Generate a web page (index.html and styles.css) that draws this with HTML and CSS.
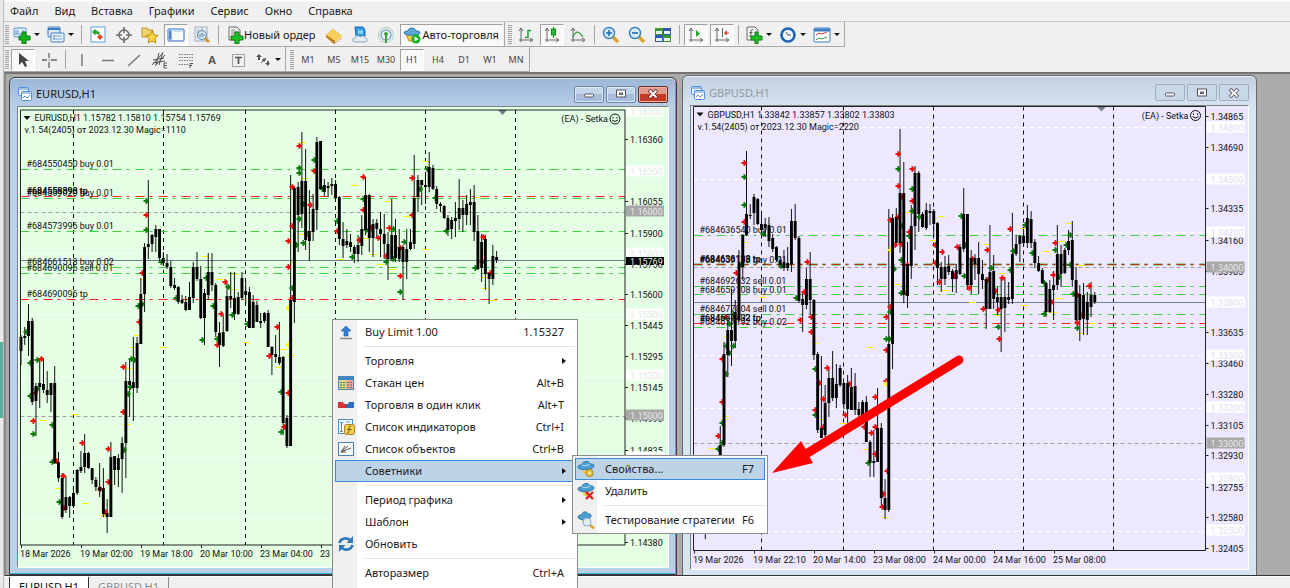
FILE: index.html
```html
<!DOCTYPE html>
<html lang="ru">
<head>
<meta charset="utf-8">
<title>EURUSD,H1</title>
<link rel="stylesheet" href="styles.css">
</head>
<body>
<div class="edge"><div class="edge-patch"></div></div>
<div class="app">
  <nav class="menubar">
    <button>Файл</button><button>Вид</button><button>Вставка</button><button>Графики</button><button>Сервис</button><button>Окно</button><button>Справка</button>
  </nav>

  <div class="toolrow">
    <div class="toolbar">
      <span class="grip"></span>
      <button class="split" aria-label="Новый график"><svg class="ico" viewBox="0 0 18 18"><rect x="1" y="2" width="12" height="9" rx="1" fill="#e6f0fb" stroke="#5b8fca"/><path d="M3 4v5M5 4v3M3 8h7M9 4l2 2" stroke="#5b8fca" fill="none"/><path d="M9 6h4v4h4v4h-4v4H9v-4H6v-4h3z" fill="#19b219" stroke="#0a7d12"/></svg><i></i></button>
      <button class="split" aria-label="Профили"><svg class="ico" viewBox="0 0 18 18"><rect x="1" y="1" width="12" height="10" rx="1" fill="#dceafa" stroke="#3e7cc0"/><path d="M1 3h12" stroke="#3e7cc0" stroke-width="2"/><rect x="4" y="7" width="13" height="9" rx="1" fill="#eaf3fd" stroke="#3e7cc0"/><path d="M6 10h9M6 13h9M7 9v5" stroke="#6f9fd4" fill="none"/></svg><i></i></button>
      <span class="sep"></span>
      <button aria-label="Обзор рынка"><svg class="ico" viewBox="0 0 18 18"><rect x="2" y="1" width="14" height="15" fill="#fff" stroke="#5fa0d8"/><path d="M6 3l3 3-3 3-3-3z" fill="#27a827"/><path d="M9 5l2 2-2 2-2-2z" fill="#27a827"/><path d="M11 8l3 3-3 3-3-3z" fill="#e8492c"/></svg></button>
      <button aria-label="Перекрестие"><svg class="ico" viewBox="0 0 18 18" fill="none" stroke="#6b6b6b"><circle cx="9" cy="9" r="5" stroke-width="1.4"/><path d="M9 1v6M9 11v6M1 9h6M11 9h6" stroke-width="1.6"/></svg></button>
      <button aria-label="Навигатор"><svg class="ico" viewBox="0 0 18 18"><path d="M1 2h5l1 2h5v7H1z" fill="#f3d36b" stroke="#b9942c"/><path d="M11 5l2 4 4 .5-3 3 .8 4.500-3.800-2-3.800 2 .8-4.500-3-3 4-.5z" fill="#ffd83d" stroke="#b98a10"/></svg></button>
      <button class="on" aria-label="Терминал"><svg class="ico" viewBox="0 0 18 18"><rect x="1" y="3" width="16" height="12" rx="1" fill="#f6faff" stroke="#2d6cc0"/><rect x="2" y="4" width="3" height="10" fill="#8db7e8"/><path d="M3 5v8" stroke="#1e4f9e"/><path d="M6 5h10" stroke="#9cc1ee"/></svg></button>
      <button aria-label="Тестер"><svg class="ico" viewBox="0 0 18 18"><rect x="2" y="1" width="12" height="14" fill="#e7edf4" stroke="#9eb0c4"/><path d="M5 3v9M9 2v6" stroke="#8fa2b7"/><path d="M12 12l4 4" stroke="#d99a24" stroke-width="3"/><circle cx="9" cy="9" r="4.500" fill="#cfe3f6" fill-opacity=".8" stroke="#6688ad"/><path d="M7 8v3M9 7v4M11 8v2" stroke="#6688ad"/></svg></button>
      <span class="sep"></span>
      <button class="wide"><svg class="ico" viewBox="0 0 18 18"><path d="M3 1h8l3 3v10H3z" fill="#f4f4f4" stroke="#6b6b6b"/><path d="M5 4h4M5 6h6M5 8h6" stroke="#8b8b8b"/><path d="M9 6h4v4h4v4h-4v4H9v-4H5v-4h4z" fill="#1fbf25" stroke="#0a7d12"/></svg><span>Новый ордер</span></button>
      <button aria-label="MetaEditor"><svg class="ico" viewBox="0 0 18 18"><path d="M1 9l7-6 9 7v2l-8 6-8-7z" fill="#b97a12"/><path d="M1 9l7-6 9 7-7 5z" fill="#f8cf5f"/><path d="M10 15l7-5v1.500l-7 5z" fill="#fff3c8"/></svg></button>
      <button aria-label="Хостинг"><svg class="ico" viewBox="0 0 18 18"><path d="M4 1h8l2 3v6H5z" fill="#2d9be8" stroke="#1a66a8"/><path d="M7 5h5M7 7h5" stroke="#dff"/><path d="M3 16c-2-1-2-4 1-4 1-3 4-3 5-1 2-2 5-1 5 1 3 0 3 4 0 4z" fill="#e3edf6" stroke="#86a3c0"/></svg></button>
      <button aria-label="Сигналы"><svg class="ico" viewBox="0 0 18 18" fill="none"><circle cx="9" cy="9" r="7.500" stroke="#a9cdb8"/><circle cx="9" cy="9" r="5" stroke="#7fb1cf" stroke-width="1.500"/><circle cx="9" cy="8" r="2" fill="#3ba53b"/><path d="M9 9v8" stroke="#3ba53b" stroke-width="2"/></svg></button>
      <button class="wide on"><svg class="ico" viewBox="0 0 18 18"><path d="M3 8h12l-2 7H6z" fill="#f3c644" stroke="#b58b1c"/><path d="M1 7c0-2 3-2 4-2 0-4 7-4 8 0 2 0 4 0 4 2 0 3-16 3-16 0z" fill="#58a8dc" stroke="#2a76ae"/><circle cx="13" cy="13" r="4.500" fill="#19b526"/><path d="M11.500 10.500l4 2.500-4 2.500z" fill="#fff"/></svg><span>Авто-торговля</span></button>
    </div>
    <div class="toolbar">
      <span class="grip"></span>
      <button aria-label="Бары"><svg class="ico" viewBox="0 0 18 18" fill="none" stroke="#666"><path d="M4 2v14M2 14h14M2 5l2-3 2 3M13 12l3 2-3 2"/><path d="M11 4v8M11 4.500h3M8 11.500h3" stroke="#1e9a2a" stroke-width="1.500"/></svg></button>
      <button class="on" aria-label="Свечи"><svg class="ico" viewBox="0 0 18 18" fill="none" stroke="#666"><path d="M4 2v14M2 14h14M2 5l2-3 2 3M13 12l3 2-3 2"/><path d="M10.500 1v11" stroke="#118a1c"/><rect x="8.500" y="3" width="4" height="6" fill="#25c02f" stroke="#118a1c"/></svg></button>
      <button aria-label="Линия"><svg class="ico" viewBox="0 0 18 18" fill="none" stroke="#666"><path d="M4 2v14M2 14h14M2 5l2-3 2 3M13 12l3 2-3 2"/><path d="M4 11c3-7 6-6 10 0" stroke="#2ba336" stroke-width="1.300"/></svg></button>
      <span class="sep"></span>
      <button aria-label="Приблизить"><svg class="ico" viewBox="0 0 18 18"><path d="M11 11l5 5" stroke="#d9a52b" stroke-width="3.500"/><circle cx="7" cy="7" r="5.500" fill="#d8ecfb" stroke="#2f7cc4" stroke-width="1.400"/><path d="M7 4v6M4 7h6" stroke="#1f6ab4" stroke-width="1.600"/></svg></button>
      <button aria-label="Отдалить"><svg class="ico" viewBox="0 0 18 18"><path d="M11 11l5 5" stroke="#d9a52b" stroke-width="3.500"/><circle cx="7" cy="7" r="5.500" fill="#d8ecfb" stroke="#2f7cc4" stroke-width="1.400"/><path d="M4 7h6" stroke="#1f6ab4" stroke-width="1.600"/></svg></button>
      <button aria-label="Плитка"><svg class="ico" viewBox="0 0 18 18"><rect x="1" y="2" width="8" height="7" fill="#3c9a2c"/><rect x="9" y="2" width="8" height="7" fill="#2c56b8"/><rect x="1" y="9" width="8" height="7" fill="#2c56b8"/><rect x="9" y="9" width="8" height="7" fill="#3c9a2c"/><path d="M2 6.500h6M10 6.500h6M2 13.500h6M10 13.500h6" stroke="#eaf4ff" stroke-width="3"/></svg></button>
      <span class="sep far"></span>
      <button class="on" aria-label="Автопрокрутка"><svg class="ico" viewBox="0 0 18 18" fill="none" stroke="#666"><path d="M4 2v14M2 14h14M2 5l2-3 2 3M13 12l3 2-3 2"/><path d="M9 4l4 3.500L9 11z" fill="#22a52f" stroke="none"/></svg></button>
      <button class="on" aria-label="Сдвиг графика"><svg class="ico" viewBox="0 0 18 18" fill="none" stroke="#666"><path d="M4 2v14M2 14h14M2 5l2-3 2 3M13 12l3 2-3 2M9.500 2v9"/><path d="M16 7h-4M13.500 5l-2 2 2 2z" stroke="#d1472a" fill="#d1472a"/></svg></button>
      <span class="sep"></span>
      <button class="split" aria-label="Индикаторы"><svg class="ico" viewBox="0 0 18 18"><path d="M2 1h8l3 3v10H2z" fill="#f4f4f4" stroke="#6b6b6b"/><path d="M8 3.500c-2 0-2 1-2 3s0 4-2 4M4.500 6.500h3" stroke="#555" fill="none"/><path d="M10 6h3v4h4v4h-4v4h-3v-4H6v-4h4z" fill="#1fbf25" stroke="#0a7d12"/></svg><i></i></button>
      <button class="split" aria-label="Периоды"><svg class="ico" viewBox="0 0 18 18"><circle cx="9" cy="9" r="6.500" fill="#eef6ff" stroke="#1f63b8" stroke-width="2.600"/><path d="M7 6l2 3h3" stroke="#555" fill="none"/></svg><i></i></button>
      <button class="split" aria-label="Шаблоны"><svg class="ico" viewBox="0 0 18 18"><rect x="1" y="2" width="16" height="14" rx="1" fill="#fff" stroke="#3d7ec4"/><path d="M1 4h16" stroke="#3d7ec4" stroke-width="3"/><path d="M3 9l3-2 3 1 5-2" stroke="#c33a28" fill="none"/><path d="M3 14l3-2 3 1 5-2" stroke="#3a9a3a" fill="none"/></svg><i></i></button>
    </div>
  </div>

  <div class="toolrow">
    <div class="toolbar gray">
      <span class="grip"></span>
      <button class="on" aria-label="Курсор"><svg class="ico" viewBox="0 0 18 18"><path d="M5 2v12l3-3 3 5 2-1-2-5h4z" fill="#444"/></svg></button>
      <button aria-label="Перекрестие"><svg class="ico" viewBox="0 0 18 18" stroke="#666"><path d="M9 2v5M9 11v6M2 9h5M11 9h6M9 8.500v1" stroke-width="1.300"/></svg></button>
      <span class="sep"></span>
      <button aria-label="Вертикальная линия"><svg class="ico" viewBox="0 0 18 18" stroke="#777"><path d="M9 3v12" stroke-width="1.500"/></svg></button>
      <button aria-label="Горизонтальная линия"><svg class="ico" viewBox="0 0 18 18" stroke="#777"><path d="M3 9.500h12" stroke-width="1.500"/></svg></button>
      <button aria-label="Трендовая линия"><svg class="ico" viewBox="0 0 18 18" stroke="#777"><path d="M3 15L15 4" stroke-width="1.500"/></svg></button>
      <button aria-label="Канал"><svg class="ico" viewBox="0 0 18 18" stroke="#555" fill="none"><path d="M1 14L11 3M4 15L14 4M2 9l11-2M2 12l12-2M8 2L5 14M12 1L8 14"/><path d="M16 12h-3v5h3M13 14.500h3"/></svg></button>
      <button aria-label="Фибоначчи"><svg class="ico" viewBox="0 0 18 18" stroke="#777" fill="none"><path d="M2 3.500h14M2 6.500h14M2 9.500h14M2 13.500h9" stroke-dasharray="1.500 1"/><path d="M16 12.500h-3V17M13 14.500h2" stroke="#555"/></svg></button>
      <button class="glyph">A</button>
      <button aria-label="Метка"><svg class="ico" viewBox="0 0 18 18" stroke="#555" fill="none"><rect x="3.500" y="3.500" width="12" height="12" stroke-dasharray="1 1"/><path d="M6 6.500h7M9.500 6v7" stroke-width="1.700"/></svg></button>
      <button class="split" aria-label="Стрелки"><svg class="ico" viewBox="0 0 18 18" fill="#555"><path d="M5 3l3 3H6v3H4V6H2z"/><path d="M7 12l5-5" stroke="#555"/><path d="M8 9l2-2 2 2-2 2z"/><path d="M13 10h2v2h1l-2 3-3-3h2z"/></svg><i></i></button>
    </div>
    <div class="toolbar periods">
      <span class="grip"></span>
      <button>M1</button><button>M5</button><button>M15</button><button>M30</button><button class="on">H1</button><button>H4</button><button>D1</button><button>W1</button><button>MN</button>
    </div>
  </div>

  <main class="workspace">
    <section class="window back">
      <header class="titlebar">
        <svg class="wico" viewBox="0 0 14 14"><rect x=".5" y=".5" width="10" height="8" rx="1" fill="#eaf3ff" stroke="#4f8fe0"/><path d="M1 2h9" stroke="#4f8fe0"/><rect x="3.500" y="4.500" width="10" height="9" rx="1" fill="#fff" stroke="#4f8fe0"/><path d="M4 6h9M5 11l2-2 2 2 3-3" stroke="#4f8fe0" fill="none"/></svg>
        <h2>GBPUSD,H1</h2>
        <button aria-label="Свернуть"><svg viewBox="0 0 12 10"><rect x="1.500" y="5" width="9" height="3" rx="1" fill="#fff" stroke="#556"/></svg></button>
        <button aria-label="Развернуть"><svg viewBox="0 0 12 10"><rect x="1.500" y="1" width="9" height="7" fill="#fff" stroke="#556"/><rect x="4.500" y="4" width="3" height="1.500" fill="#ccd" stroke="#556"/></svg></button>
        <button aria-label="Закрыть"><svg viewBox="0 0 12 10"><path d="M2 1l8 8M10 1L2 9" stroke="#556" stroke-width="3.600"/><path d="M2.500 1.500l7 7M9.500 1.500l-7 7" stroke="#fff" stroke-width="1.800"/></svg></button>
      </header>
      <svg class="chart lilac" id="gbp" viewBox="691 106 557 463" preserveAspectRatio="xMinYMin slice"></svg>
    </section>

    <section class="window front">
      <header class="titlebar">
        <svg class="wico" viewBox="0 0 14 14"><rect x=".5" y=".5" width="10" height="8" rx="1" fill="#eaf3ff" stroke="#4f8fe0"/><path d="M1 2h9" stroke="#4f8fe0"/><rect x="3.500" y="4.500" width="10" height="9" rx="1" fill="#fff" stroke="#4f8fe0"/><path d="M4 6h9M5 11l2-2 2 2 3-3" stroke="#4f8fe0" fill="none"/></svg>
        <h2>EURUSD,H1</h2>
        <button aria-label="Свернуть"><svg viewBox="0 0 12 10"><rect x="1.500" y="5" width="9" height="3" rx="1" fill="#fff" stroke="#556"/></svg></button>
        <button aria-label="Развернуть"><svg viewBox="0 0 12 10"><rect x="1.500" y="1" width="9" height="7" fill="#fff" stroke="#556"/><rect x="4.500" y="4" width="3" height="1.500" fill="#ccd" stroke="#556"/></svg></button>
        <button class="close" aria-label="Закрыть"><svg viewBox="0 0 12 10"><path d="M2 1l8 8M10 1L2 9" stroke="#622" stroke-width="3.600"/><path d="M2.500 1.500l7 7M9.500 1.500l-7 7" stroke="#fff" stroke-width="2"/></svg></button>
      </header>
      <svg class="chart green" id="eur" viewBox="18 107 650 460" preserveAspectRatio="xMinYMin slice"></svg>
    </section>
  </main>

  <footer class="tabs"><button class="active">EURUSD,H1</button><button>GBPUSD,H1</button></footer>
</div>

<div class="menu" role="menu">
  <button><svg class="ico" viewBox="0 0 18 18"><path d="M9 3l5 5h-3v5H7V8H4z" fill="#2f7fd6" stroke="#1b5ca8" stroke-width=".6"/><path d="M3 15.500h12" stroke="#888" stroke-width="1.500"/></svg><span>Buy Limit 1.00</span><kbd>1.15327</kbd></button>
  <hr>
  <button class="sub"><b></b><span>Торговля</span></button>
  <button><svg class="ico" viewBox="0 0 18 18"><rect x="1.500" y="2.500" width="15" height="13" fill="#fff" stroke="#4a83b8"/><path d="M2 4.500h14" stroke="#3f86c9" stroke-width="3"/><rect x="2" y="6" width="7" height="9" fill="#c8e08a"/><rect x="9" y="6" width="7" height="9" fill="#f0a898"/><path d="M3 8.500h5M3 11h5M3 13.500h5M10 8.500h5M10 11h5M10 13.500h5" stroke="#666" stroke-dasharray="2 1"/></svg><span>Стакан цен</span><kbd>Alt+B</kbd></button>
  <button><svg class="ico" viewBox="0 0 18 18"><path d="M1 6h5l1 2h2v4H1z" fill="#d93030"/><path d="M17 6h-5l-1 2H9v4h8z" fill="#2f6fb8"/></svg><span>Торговля в один клик</span><kbd>Alt+T</kbd></button>
  <button><svg class="ico" viewBox="0 0 18 18"><rect x="1.500" y="1.500" width="14" height="14" fill="#f5fafe" stroke="#4a90c8"/><path d="M4.500 4v10M3 4.500h3M3 13.500h3M9 4h4" stroke="#5c8fb8"/><rect x="7.500" y="6.500" width="10" height="10" rx="2" fill="#f3cf4a" stroke="#a8842a"/><path d="M14 8c-2 0-2 1-2 3s0 4-2 4M10.500 11.500h4" stroke="#6d5312" fill="none"/></svg><span>Список индикаторов</span><kbd>Ctrl+I</kbd></button>
  <button><svg class="ico" viewBox="0 0 18 18"><rect x="1.500" y="2.500" width="15" height="13" fill="#fafcff" stroke="#4a83b8"/><path d="M4 12L8 6M4 12l7-6M4 12l10-4M4 12h5" stroke="#555" fill="none"/></svg><span>Список объектов</span><kbd>Ctrl+B</kbd></button>
  <button class="sub hot"><b></b><span>Советники</span></button>
  <hr>
  <button class="sub"><b></b><span>Период графика</span></button>
  <button class="sub"><b></b><span>Шаблон</span></button>
  <button><svg class="ico" viewBox="0 0 18 18" fill="none" stroke="#2f78b8" stroke-width="2.600"><path d="M2.500 8c1-5 8-6 11-2.500M15.500 10c-1 5-8 6-11 2.500"/><path d="M16 1v7H9.500zM2 17v-7h6.500z" fill="#2f78b8" stroke="none"/></svg><span>Обновить</span></button>
  <hr>
  <button><b></b><span>Авторазмер</span><kbd>Ctrl+A</kbd></button>
</div>

<div class="menu submenu" role="menu">
  <button class="hot"><svg class="ico" viewBox="0 0 18 18"><path d="M4 8h9l-2 6H7z" fill="#e9c95c"/><path d="M1 7c0-2 3-2 4-2 0-4 7-5 8-1 2 0 4 0 4 2 0 4-16 5-16 1z" fill="#4a9fd2" stroke="#2a76ae"/><path d="M5 5c2 1 5 1 8-1" stroke="#bfe2f5" fill="none"/><circle cx="12.500" cy="13" r="3.600" fill="#e8c13a" stroke="#a8842a"/><circle cx="12.500" cy="13" r="1.200" fill="#fff3c0"/></svg><span>Свойства...</span><kbd>F7</kbd></button>
  <button><svg class="ico" viewBox="0 0 18 18"><path d="M4 8h9l-2 6H7z" fill="#e9c95c"/><path d="M1 7c0-2 3-2 4-2 0-4 7-5 8-1 2 0 4 0 4 2 0 4-16 5-16 1z" fill="#4a9fd2" stroke="#2a76ae"/><path d="M5 5c2 1 5 1 8-1" stroke="#bfe2f5" fill="none"/><path d="M9 10l7 7M16 10l-7 7" stroke="#e02020" stroke-width="2.400"/></svg><span>Удалить</span></button>
  <hr>
  <button><svg class="ico" viewBox="0 0 18 18"><path d="M4 8h9l-2 6H7z" fill="#e9c95c"/><path d="M1 6c0-2 3-2 4-2 0-4 5-4 6-1 2 0 3 0 3 2 0 4-13 5-13 1z" fill="#4a9fd2" stroke="#2a76ae"/><path d="M13 14l4 3.500" stroke="#d9a52b" stroke-width="2.500"/><circle cx="10" cy="11" r="4" fill="#dff0fb" stroke="#8aa9c0"/></svg><span>Тестирование стратегии</span><kbd>F6</kbd></button>
</div>

<svg class="pointer" viewBox="0 0 196 124"><path d="M189 10L36 104" stroke="#f00" stroke-width="9" stroke-linecap="round"/><path d="M2 123L31 91 35 98 39 106 43 113z" fill="#f00"/></svg>

<script src="chart.js"></script>
</body>
</html>
```

FILE: styles.css
```css
* { box-sizing: border-box; }
body {
  margin: 0; height: 100vh; overflow: hidden; display: flex; position: relative;
  font: 11px/16px "Noto Sans", "Open Sans", sans-serif; color: #1a1a1a; background: #f0f0f0;
}
button { font: inherit; color: inherit; border: 0; background: none; padding: 0; margin: 0; }
.edge { width: 4px; flex: none; background: #e9e9eb; padding-top: 342px; border-right: 1px solid #bdbdbd; }
.edge-patch { height: 76px; background: #5fae9d; }
.app { flex: 1; min-width: 0; display: flex; flex-direction: column; }

.menubar { height: 22px; flex: none; display: flex; align-items: center; gap: 16px; padding: 0 0 1px 6px; border-top: 2px solid #fbfbfb; border-bottom: 1px solid #c4c4c4; }

.toolrow { display: flex; flex: none; height: 25px; }
.toolbar { display: flex; align-items: center; gap: 2px; padding: 1px 1px 0; border-right: 1px solid #a8a8a8; border-bottom: 1px solid #a8a8a8; }
.toolbar + .toolbar { padding-left: 3px; }
.toolbar + .periods { padding-left: 4px; }
.toolbar button { width: 24px; height: 22px; display: flex; align-items: center; justify-content: center; border: 1px solid transparent; }
.toolbar button.on { background: #f9f9f9; border-color: #a0a0a0 #fff #fff #a0a0a0; }
.toolbar button.split { width: 32px; justify-content: flex-start; padding-left: 1px; }
.toolbar button.wide { width: auto; padding: 0 3px 0 2px; }
.toolbar button.wide.on { gap: 2px; }
.split i { margin-left: 3px; border: 3px solid transparent; border-top-color: #111; border-bottom: 0; }
.grip { width: 4px; height: 19px; flex: none; background: repeating-linear-gradient(#a0a0a0 0 1px, #f0f0f0 1px 2px); }
.sep { width: 1px; height: 19px; margin: 0 2px; background: #a8a8a8; }
.ico { width: 18px; height: 18px; flex: none; display: block; }
.glyph { color: #555; font-weight: 700; }
.periods button { font-size: 9px; color: #444; }

.workspace { flex: 1; min-height: 0; position: relative; overflow: hidden; background: #ababab; border-top: 2px solid #747474; border-left: 2px solid #8a8a8a; border-bottom: 1px solid #333; }
.window { position: absolute; display: flex; flex-direction: column; border: 1px solid #3c3c3c; border-radius: 6px 6px 0 0; padding: 0 7px 6px; }
.front { left: 3px; top: 3px; width: 668px; height: 498px; background: linear-gradient(#9bb6d6, #b9d0ea 30px); box-shadow: inset 0 1px #dce9f7, inset -1px -1px #36b5cf; }
.back { left: 676px; top: 1px; width: 575px; height: 502px; background: linear-gradient(#c2d0df, #d6e3f0 30px); border-color: #666; box-shadow: inset 0 1px #eef4fa; }
.titlebar { height: 29px; flex: none; display: flex; align-items: center; padding: 4px 0 0 1px; }
.front .titlebar { height: 28px; padding-right: 1px; }
.titlebar h2 { flex: 1; margin: 0 0 0 4px; font-size: 11px; font-weight: 400; }
.back h2 { color: #9299a2; }
.wico { width: 14px; height: 14px; }
.titlebar button { width: 30px; height: 17px; margin-left: 2px; display: grid; place-items: center; border: 1px solid #6f86a3; border-radius: 2px; background: linear-gradient(#c5d6ea 50%, #a6bedb 50%); box-shadow: inset 0 0 0 1px #dbe8f5; }
.back .titlebar button { background: #c9d8e8; border-color: #9fb0c4; box-shadow: none; }
.titlebar .close, .front .titlebar .close { background: linear-gradient(#e09a8c 50%, #c23b23 50%); border-color: #6c2a20; box-shadow: inset 0 0 0 1px #eab4a8; }
.titlebar button svg { width: 12px; height: 10px; }
.chart { flex: 1; min-height: 0; width: 100%; border: 1px solid #808080; border-right-color: #fff; border-bottom-color: #fff; }
.chart.green { background: #e4ffe4; }
.chart.lilac { background: #ede8ff; }
.chart text { font: 9px Roboto, "Noto Sans", sans-serif; fill: #111; }
.chart.green .faint { fill: #dcebdc; }
.chart.lilac .faint { fill: #e2dcf2; }
.chart .inv { fill: #e8e8e8; }

.tabs { height: 12px; flex: none; display: flex; align-items: flex-start; overflow: hidden; padding-left: 5px; border-top: 1px solid #fff; }
.tabs button { height: 20px; padding: 0 9px; color: #8c8c8c; border-right: 1px solid #8c8c8c; }
.tabs .active { color: #111; background: #fff; border: solid #333; border-width: 0 1px; }

.menu { position: absolute; left: 332px; top: 319px; width: 246px; padding: 1px 2px 12px; display: flex; flex-direction: column; border: 1px solid #8c8c8c; background: linear-gradient(90deg, #f0f0f0 24px, #fff 24px); }
.menu button { height: 22px; flex: none; display: grid; grid-template-columns: 30px 1fr auto; align-items: center; text-align: left; padding-right: 11px; }
.menu button.hot { background: #bdd3e6; box-shadow: inset 0 0 0 1px #3a8cd8; }
.menu .ico { margin-left: 2px; }
.menu kbd { font: inherit; }
.menu hr { height: 1px; margin: 3px 0 3px 30px; border: 0; flex: none; width: auto; align-self: stretch; background: #e2e2e2; }
.menu .sub::after { content: ""; border: 3px solid transparent; border-left: 4px solid #111; border-right: 0; margin-right: -2px; }
.submenu { left: 572px; top: 455px; width: 196px; padding: 2px; }
.pointer { position: absolute; left: 770px; top: 350px; width: 196px; height: 124px; fill: none; }
```

FILE: chart.js
```javascript
// Each candle is "high,low,open edge,close edge"; candles follow one another at STEP.
const STEP = 3.745;
const NS = "http://www.w3.org/2000/svg";

const eur = {
  id: "eur", left: 20.5, top: 110, right: 625, bottom: 545, x0: 21, bg: "#e4ffe4",
  candles: "335,365,337,351 327,345,336,338 304,356,321,336 318,405,321,402 383,436,386,401 360,408,383,387 358,393,384,390 371,403,390,395 383,412,383,395 366,464,383,463 452,482,462,478 473,519,478,517 476,513,497,510 496,518,497,506 486,508,493,506 469,495,470,493 451,473,467,471 434,473,453,467 452,469,453,468 468,484,468,480 477,491,480,487 463,497,487,491 468,517,488,514 499,533,513,517 442,517,457,517 456,485,456,470 454,487,458,470 437,493,443,459 362,478,381,443 358,417,381,385 337,421,382,388 337,393,343,388 278,344,294,344 243,312,247,294 180,259,244,247 234,252,235,244 225,252,229,237 229,262,229,258 252,266,258,263 254,269,263,267 261,288,267,286 278,290,285,288 286,304,287,302 295,304,300,303 296,311,302,310 282,310,297,310 262,303,267,298 252,281,267,279 266,319,279,318 289,345,293,318 253,300,272,295 253,291,272,285 283,337,285,332 322,367,333,345 315,347,332,346 283,332,296,331 272,308,296,299 272,320,298,314 292,315,297,314 272,300,278,298 280,305,291,295 287,328,292,328 295,328,302,328 301,322,305,322 313,328,321,323 312,323,313,321 310,347,313,347 346,375,347,355 335,363,354,357 322,365,357,363 356,435,357,423 415,448,418,446 175,446,300,446 186,323,188,302 182,252,187,215 132,228,181,214 149,250,181,240 190,261,231,241 194,241,209,232 137,230,142,210 141,190,141,189 179,196,185,192 182,197,186,188 178,195,184,186 180,199,184,198 196,245,197,239 222,258,239,246 229,248,241,245 234,252,242,247 245,263,247,254 235,262,245,254 215,255,229,246 177,235,195,230 194,252,195,238 219,257,224,238 219,238,223,229 212,257,229,234 214,259,234,244 232,280,244,259 199,261,235,259 219,262,235,258 229,262,247,259 245,300,247,262 229,279,249,262 229,250,242,249 155,249,198,244 175,212,180,197 180,205,180,185 172,204,185,187 152,192,167,187 165,190,168,189 186,209,189,204 202,212,204,206 205,219,206,218 215,236,218,230 217,239,220,229 202,237,218,221 179,230,208,219 200,232,208,215 195,225,204,215 189,225,202,205 185,241,202,232 215,270,231,269 234,282,242,268 235,290,239,274 272,304,273,279 245,285,256,279 251,263,257,260",
  red: "299,146 314,171 292,187 310,205 146,215 292,226 288,241 337,231 307,234 142,273 288,267 225,282 292,298 221,314 277,327 139,322 217,345 269,356 41,359 123,367 288,393 123,412 33,421 35,393 284,427 82,443 108,449 56,461 63,476 108,482 100,489 64,508 105,512 363,177 412,178 363,210 412,215 371,228 389,228 359,240 378,238 400,248 386,256 400,276 483,237 482,262 490,273",
  green: "314,160 299,168 299,173 322,189 146,201 146,230 299,219 303,243 296,245 303,204 337,221 161,262 206,278 228,287 292,288 176,298 213,306 138,306 142,304 232,315 247,324 26,332 217,339 202,340 30,363 37,360 131,359 134,360 130,387 128,394 30,396 37,389 281,392 52,425 33,434 52,462 59,502 124,450 281,432 427,169 420,189 435,198 363,199 366,230 393,229 446,231 404,242 352,257 386,262 393,259 400,292 475,268",
  yellow: "302,142 305,178 302,234 205,256 143,279 219,279 234,274 233,289 293,262 137,335 133,347 163,347 246,342 129,368 283,349 290,355 279,367 74,414 43,420 126,424 58,488 85,503 103,515 425,161 354,185 388,201 477,197 406,216 425,249 366,238 340,259 373,254 380,264 392,269 485,288 493,300 485,277",
  gold: "288,308 288,345",
  vertical: [73.5, 163.5, 245.5, 335.5, 425.5, 515.5],
  white: [172.5, 253.5, 314.5, 376.5, 457.5, 518.5],
  gray: [212.5, 416.5], greenLines: [169.5, 198.5, 231.5, 267.5, 273.5],
  redLines: [196.5, 299.5], brown: [], price: 260.5,
  ticks: [["1.16360", 139], ["1.16055", 201], ["1.15900", 233], ["1.15750", 264], ["1.15600", 294], ["1.15445", 325], ["1.15295", 356], ["1.15145", 387], ["1.14990", 418], ["1.14835", 450], ["1.14380", 542]],
  faint: [["1.16500", 111], ["1.16200", 171], ["1.15800", 253], ["1.15500", 314], ["1.15200", 375], ["1.14800", 457]],
  round: [["1.16000", 211], ["1.15000", 415]],
  last: ["1.15769", 261],
  dates: [["18 Mar 2026", 20], ["19 Mar 02:00", 80], ["19 Mar 18:00", 140], ["20 Mar 10:00", 200], ["23 Mar 04:00", 260], ["23 Mar 20:00", 320]],
  labels: [["#684550450 buy 0.01", 167], ["#684559898 tp", 194], ["#684558390 tp", 194], ["#684559020 buy 0.01", 196], ["#684573996 buy 0.01", 229], ["#684661518 buy 0.02", 265], ["#684690096 sell 0.01", 271], ["#684690096 tp", 297]],
  head: "EURUSD,H1  1.15782 1.15810 1.15754 1.15769", note: "v.1.54(2405) от 2023.12.30 Magic=1110", mark: 502
};

const gbp = {
  id: "gbp", left: 693.5, top: 106.5, right: 1205.5, bottom: 550.5, x0: 705.3, bg: "#ede8ff",
  candles: "460,539,470,530 456,500,470,500 456,500,470,500 456,500,470,500 426,480,445,480 342,447,354,445 320,377,330,355 289,366,330,341 300,348,312,341 250,322,262,320 234,280,235,267 151,236,214,235 204,219,215,216 194,225,197,213 198,225,199,224 214,235,224,230 218,237,224,228 217,247,225,241 234,252,238,249 246,262,247,260 256,268,260,265 250,271,262,268 247,271,263,268 209,272,221,264 204,240,221,238 236,303,238,301 293,332,299,305 268,309,279,305 252,315,279,300 299,360,300,355 352,433,354,430 356,438,428,438 385,437,403,435 367,417,378,403 351,401,378,398 364,408,384,398 365,387,368,385 382,409,383,404 375,423,383,409 368,410,387,410 373,415,386,410 402,418,409,415 400,420,402,417 396,442,402,442 440,477,442,463 430,477,461,463 388,462,428,462 423,508,428,498 479,519,498,510 209,512,344,510 214,369,218,344 208,245,217,243 129,253,193,243 162,303,193,295 242,308,264,296 205,279,226,266 166,250,173,226 171,232,173,214 212,228,214,227 203,230,210,228 204,225,211,213 209,237,211,224 222,285,223,268 262,292,267,279 256,285,267,279 255,275,266,272 269,292,271,279 264,293,270,279 244,275,247,274 188,252,214,249 214,290,214,285 250,294,258,285 254,280,258,264 242,294,258,274 260,289,274,280 277,329,279,309 225,309,272,309 255,309,271,299 287,315,297,302 279,352,297,309 277,332,297,308 282,304,297,300 213,304,254,299 235,256,244,254 235,262,236,244 230,247,236,243 205,248,218,243 211,248,219,243 239,268,242,263 256,272,263,271 268,284,270,283 282,317,283,312 280,313,289,312 271,320,285,290 225,290,254,285 245,287,254,274 248,274,250,273 230,255,241,250 221,287,240,280 267,322,280,320 285,341,294,320 283,335,295,319 292,335,302,320 282,317,295,307 292,304,295,302",
  red: "744,163 898,154 912,169 898,186 912,201 902,197 744,222 898,217 890,220 909,232 895,245 901,244 935,245 957,247 942,252 987,250 807,262 935,263 972,259 736,273 907,265 954,276 939,282 969,288 804,292 906,293 995,291 987,280 983,309 998,310 725,317 800,320 811,317 886,317 890,307 1010,229 1055,243 1002,278 1053,275 1051,302 1089,286 1077,295 1082,315 811,332 722,359 827,368 819,383 823,399 722,402 815,410 823,427 845,415 849,384 875,397 864,427 875,427 871,433 718,436 886,350 875,454 887,471 883,494 882,507 886,381 999,339 1077,323",
  green: "744,177 898,169 912,189 744,205 912,211 919,217 961,216 763,234 909,236 902,226 741,265 781,266 901,260 894,269 901,293 964,276 991,268 796,298 733,314 890,312 965,245 1025,225 1070,235 1013,251 1032,253 1055,250 1066,245 1010,270 1044,283 1070,265 1059,277 1073,294 1044,314 729,324 726,346 733,346 729,353 726,374 815,369 815,415 886,339 889,339 722,423 722,443 718,449 868,463 998,327 1077,328",
  yellow: "743,242 762,297 908,212 898,216 941,216 933,240 986,244 1069,223 1023,228 1061,241 1046,251 1001,273 896,284 945,290 972,302 1024,305 1053,312 1058,298 1080,265 814,343 870,347 724,419 725,416 821,419 712,448 843,423 866,449 885,517 727,336 998,315 1081,333 1092,323",
  gold: "890,250 886,384",
  vertical: [761.5, 843.5, 933.5, 1023.5, 1113.5],
  white: [127.5, 179.5, 232.5, 355.5, 408.5, 479.5, 531.5],
  gray: [267.5, 443.5], greenLines: [235.5, 286.5, 294.5, 314.5, 327.5],
  redLines: [323.5], brown: [264.5], price: 302.5,
  ticks: [["1.34865", 116], ["1.34690", 147], ["1.34335", 208], ["1.34160", 240], ["1.33985", 271], ["1.33635", 332], ["1.33460", 363], ["1.33280", 394], ["1.33105", 425], ["1.32930", 455], ["1.32755", 487], ["1.32580", 517], ["1.32405", 548]],
  faint: [["1.34800", 127], ["1.34500", 179], ["1.34200", 232], ["1.33800", 302], ["1.33500", 355], ["1.33200", 407], ["1.32800", 478], ["1.32500", 530]],
  round: [["1.34000", 267], ["1.33000", 443]],
  last: null,
  dates: [["19 Mar 2026", 693], ["19 Mar 22:10", 753], ["20 Mar 14:00", 813], ["23 Mar 08:00", 873], ["24 Mar 00:00", 933], ["24 Mar 16:00", 993], ["25 Mar 08:00", 1053]],
  labels: [["#684636540 buy 0.01", 233], ["#684636138 tp", 262], ["#684638193 tp", 262], ["#684659148 buy 0.01", 263], ["#684692632 sell 0.01", 284], ["#684659108 buy 0.01", 293], ["#684677804 sell 0.01", 312], ["#684677192 tp", 321], ["#684661432 tp", 321], ["#684677192 buy 0.02", 325]],
  head: "GBPUSD,H1  1.33842 1.33857 1.33802 1.33803", note: "v.1.54(2405) от 2023.12.30 Magic=2220", mark: 1101
};

function draw(c) {
  const svg = document.getElementById(c.id);
  const add = (name, attrs, text) => {
    const el = document.createElementNS(NS, name);
    for (const key in attrs) el.setAttribute(key, attrs[key]);
    if (text) el.textContent = text;
    svg.appendChild(el);
  };
  const path = (d, stroke, dash, width) =>
    add("path", { d, stroke, fill: "none", "stroke-width": width || 1, "stroke-dasharray": dash || "none" });
  const across = ys => ys.map(y => `M${c.left} ${y}H${c.right}`).join("");
  const points = s => s.split(" ").map(p => p.split(",").map(Number));
  const arrows = (s, fill) =>
    add("path", { fill, d: points(s).map(([x, y]) => `M${x - 2.5} ${y - 1}h2v-2h1l2.500 3-2.500 3h-1v-2h-2z`).join("") });

  path(across(c.white), "#fff", "5 3");
  path(across(c.gray), "#a0a0a0", "4 3");
  path(c.vertical.map(x => `M${x} ${c.top}V${c.bottom}`).join(""), "#111", "4 4");
  path(across(c.greenLines), "#45cf45", "9 5 3 6");
  path(across(c.redLines), "#f22", "9 5 3 6", 1.2);
  path(across(c.brown), "#55b040", "9 5 3 6", 2);
  path(across(c.brown), "#b03a1a", "9 5 3 6", 1.2);
  path(across([c.price]), "#708090");

  let wicks = "", bodies = "";
  points(c.candles).forEach(([hi, lo, a, b], i) => {
    const x = c.x0 + i * STEP;
    wicks += `M${x} ${hi}V${lo}`;
    bodies += `M${x} ${a}V${b}`;
  });
  path(points(c.yellow).map(([x, y]) => `M${x - 3} ${y + 0.5}h7`).join(""), "#fff000");
  path(wicks, "#111", null, 1);
  arrows(c.green, "#087a08");
  arrows(c.red, "#f40a0a");
  arrows(c.gold, "#fff000");
  path(bodies, "#000", null, 2.9);

  c.labels.forEach(([t, y]) => add("text", { x: c.left + 6, y }, t));
  const hx = c.left;
  add("path", { d: `M${hx + 3} ${c.top + 6}h7l-3.500 4z`, fill: "#111" });
  add("text", { x: hx + 14, y: c.top + 11, "xml:space": "preserve" }, c.head);
  add("text", { x: hx + 4, y: c.top + 23 }, c.note);
  const sx = c.right - 10, sy = c.top + 9;
  add("text", { x: sx - 7, y: sy + 3, "text-anchor": "end" }, "(EA) - Setka");
  add("circle", { cx: sx, cy: sy, r: 5, fill: "none", stroke: "#111" });
  path(`M${sx - 2} ${sy - 2}v1.500M${sx + 2} ${sy - 2}v1.500M${sx - 3} ${sy + 1}q3 3 6 0`, "#111");
  add("path", { d: `M${c.mark - 4} ${c.top}h9l-4.500 5z`, fill: "#708090" });

  const ticks = c.ticks.map(([, y]) => `M${c.right} ${y + 0.5}h3`).join("");
  const feet = c.dates.map(([, x]) => `M${x + 1.5} ${c.bottom}v3`).join("");
  path(`M${c.left} ${c.bottom}V${c.top}H${c.right}V${c.bottom}z${ticks}${feet}`, "#222");
  c.dates.forEach(([t, x]) => add("text", { x, y: c.bottom + 12 }, t));
  const price = ([t, y], cls) => add("text", { x: c.right + 5, y: y + 4, class: cls }, t);
  const box = ([, y], fill, h) => add("rect", { x: c.right + 1, y: y - h / 2, width: 38, height: h, fill });
  c.ticks.forEach(t => price(t, ""));
  c.faint.forEach(t => { box(t, "#fff", 11); price(t, "faint"); });
  c.round.forEach(t => { box(t, "#a8a8a8", 11); price(t, "inv"); });
  if (c.last) { box(c.last, "#000", 8); price(c.last, "inv"); }
}

draw(eur);
draw(gbp);
```
